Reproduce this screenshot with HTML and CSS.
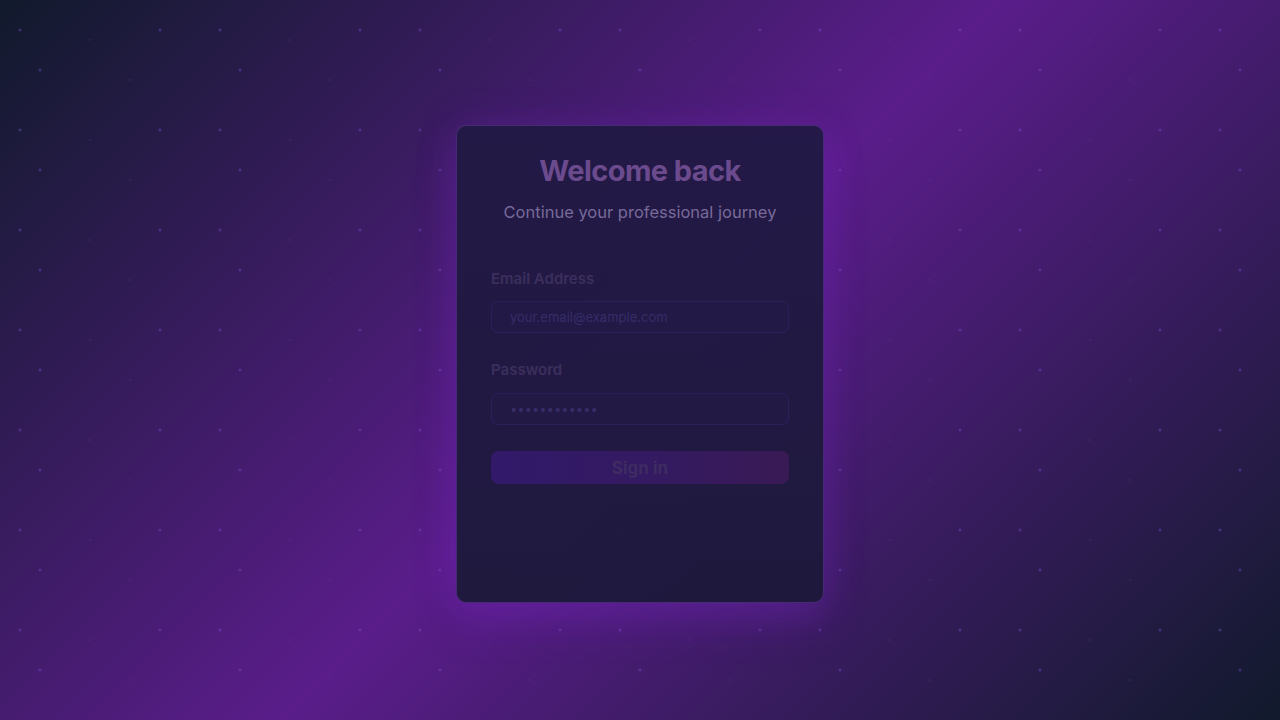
FILE: index.html
```html
<!DOCTYPE html>
<html lang="en">
<head>
<meta charset="utf-8">
<title>Welcome back</title>
<link rel="stylesheet" href="styles.css">
</head>
<body>
<div class="page">
  <div class="card">
    <h1 class="title">Welcome back</h1>
    <p class="subtitle">Continue your professional journey</p>
    <form class="form">
      <div class="field">
        <label class="label" for="email">Email Address</label>
        <input class="input" id="email" type="email" placeholder="your.email@example.com">
      </div>
      <div class="field">
        <label class="label" for="pw">Password</label>
        <input class="input" id="pw" type="password" placeholder="••••••••••••">
      </div>
      <button class="btn" type="button">Sign in</button>
    </form>
  </div>
</div>
</body>
</html>
```
FILE: styles.css
```css
* { box-sizing: border-box; }
html, body { margin: 0; height: 100%; }
body {
  font-family: Inter, "Noto Sans", "Liberation Sans", sans-serif;
  background-color: #2a1a52;
  background-image:
    radial-gradient(2px 2px at 20px 30px, rgba(125, 80, 210, 0.6), transparent),
    radial-gradient(2px 2px at 40px 70px, rgba(125, 80, 210, 0.6), transparent),
    radial-gradient(1px 1px at 90px 40px, rgba(125, 80, 210, 0.5), transparent),
    radial-gradient(1px 1px at 130px 80px, rgba(125, 80, 210, 0.5), transparent),
    radial-gradient(2px 2px at 160px 30px, rgba(125, 80, 210, 0.6), transparent),
    linear-gradient(135deg, #111a2c 0%, #5a1d8a 50%, #111a2c 100%);
  background-size: 200px 100px, 200px 100px, 200px 100px, 200px 100px, 200px 100px, 100% 100%;
  background-repeat: repeat, repeat, repeat, repeat, repeat, no-repeat;
}
.page {
  height: 100vh;
  display: flex;
  align-items: center;
  justify-content: center;
  padding-top: 8px;
}
.card {
  width: 368px;
  height: 478px;
  padding: 26px 34px 34px;
  border-radius: 10px;
  border: 1px solid rgba(110, 60, 170, 0.5);
  background: linear-gradient(180deg, rgba(33, 25, 68, 0.95), rgba(30, 25, 60, 0.97));
  box-shadow: 0 0 40px rgba(130, 40, 210, 0.2), 0 20px 40px rgba(130, 40, 210, 0.25);
  text-align: center;
}
.title {
  margin: 0;
  font-size: 29px;
  line-height: 38px;
  font-weight: 700;
  letter-spacing: -0.6px;
  color: #6b4b8d;
}
.subtitle {
  margin: 10px 0 0;
  font-size: 16.5px;
  line-height: 24px;
  color: #786a99;
}
.form {
  margin-top: 44px;
  display: flex;
  flex-direction: column;
  text-align: left;
}
.field { display: flex; flex-direction: column; margin-bottom: 26px; }
.field + .field { margin-bottom: 26px; }
.label {
  font-size: 15px;
  line-height: 22px;
  font-weight: 600;
  color: #3c2f5e;
  margin-bottom: 11px;
}
.field + .field .label { margin-bottom: 12px; }
.input {
  height: 32px;
  border-radius: 7px;
  border: 1px solid rgba(70, 50, 140, 0.28);
  background: rgba(40, 30, 90, 0.15);
  padding: 0 18px;
  font-family: inherit;
  font-size: 13px;
  color: #362d68;
  outline: none;
}
.input::placeholder { color: #362d68; }
.btn {
  height: 33px;
  border: none;
  border-radius: 8px;
  background: linear-gradient(90deg, #32196a 0%, #341a60 60%, #3a1a55 100%);
  font-family: inherit;
  font-size: 17px;
  font-weight: 700;
  color: #3e2c62;
}
```
